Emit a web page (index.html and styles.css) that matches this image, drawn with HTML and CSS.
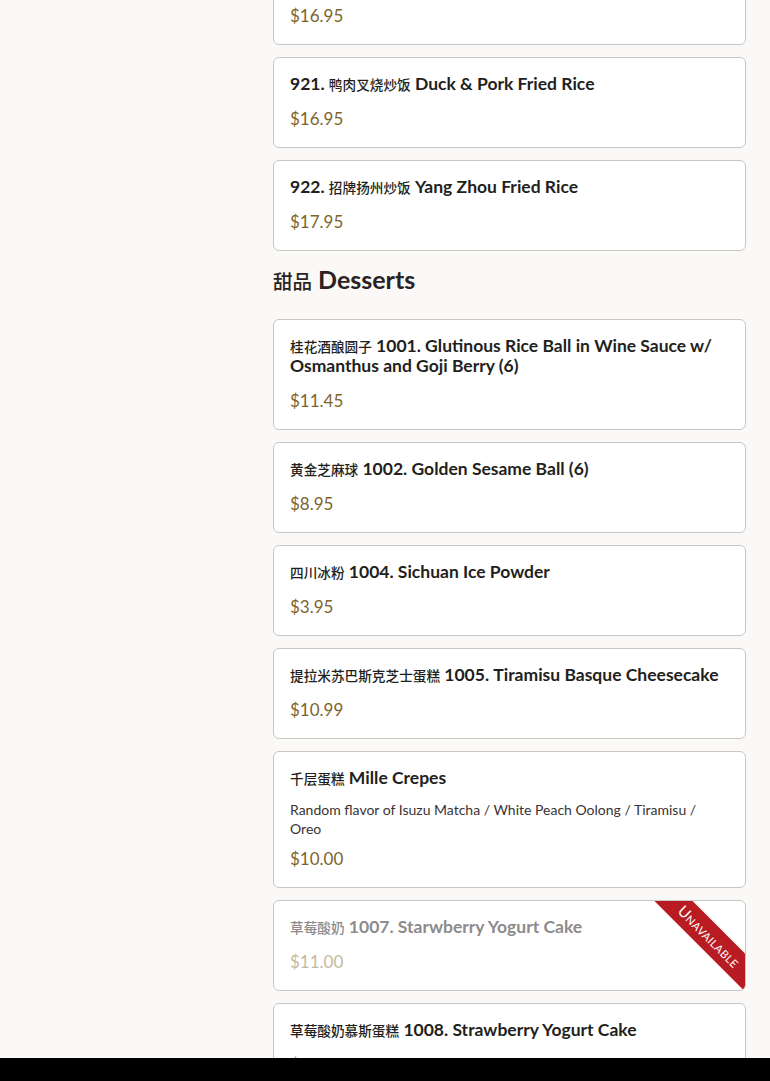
FILE: index.html
```html
<!DOCTYPE html>
<html lang="en">
<head>
<meta charset="utf-8">
<title>Menu</title>
<link rel="stylesheet" href="styles.css">
</head>
<body>
<div class="layout">
  <aside class="sidebar"></aside>
  <main class="menu">
    <section class="category">
      <div class="item">
        <div class="item-price">$16.95</div>
      </div>
      <div class="item">
        <h3 class="item-title">921. <span class="zh">鸭肉叉烧炒饭</span> Duck &amp; Pork Fried Rice</h3>
        <div class="item-price">$16.95</div>
      </div>
      <div class="item">
        <h3 class="item-title">922. <span class="zh">招牌扬州炒饭</span> Yang Zhou Fried Rice</h3>
        <div class="item-price">$17.95</div>
      </div>
    </section>
    <section class="category">
      <h2 class="category-title"><span class="zh">甜品</span> Desserts</h2>
      <div class="item">
        <h3 class="item-title"><span class="zh">桂花酒酿圆子</span> 1001. Glutinous Rice Ball in Wine Sauce w/ Osmanthus and Goji Berry (6)</h3>
        <div class="item-price">$11.45</div>
      </div>
      <div class="item">
        <h3 class="item-title"><span class="zh">黄金芝麻球</span> 1002. Golden Sesame Ball (6)</h3>
        <div class="item-price">$8.95</div>
      </div>
      <div class="item">
        <h3 class="item-title"><span class="zh">四川冰粉</span> 1004. Sichuan Ice Powder</h3>
        <div class="item-price">$3.95</div>
      </div>
      <div class="item">
        <h3 class="item-title"><span class="zh">提拉米苏巴斯克芝士蛋糕</span> 1005. Tiramisu Basque Cheesecake</h3>
        <div class="item-price">$10.99</div>
      </div>
      <div class="item">
        <h3 class="item-title"><span class="zh">千层蛋糕</span> Mille Crepes</h3>
        <p class="item-desc">Random flavor of Isuzu Matcha / White Peach Oolong / Tiramisu / Oreo</p>
        <div class="item-price">$10.00</div>
      </div>
      <div class="item unavailable">
        <h3 class="item-title"><span class="zh">草莓酸奶</span> 1007. Starwberry Yogurt Cake</h3>
        <div class="item-price">$11.00</div>
        <span class="ribbon">Unavailable</span>
      </div>
      <div class="item">
        <h3 class="item-title"><span class="zh">草莓酸奶慕斯蛋糕</span> 1008. Strawberry Yogurt Cake</h3>
        <div class="item-price">$12.00</div>
      </div>
    </section>
  </main>
</div>
<div class="bottom-bar"></div>
</body>
</html>
```

FILE: styles.css
```css
* { box-sizing: border-box; }

html, body {
  margin: 0;
  padding: 0;
  background: #faf9f7;
  font-family: "Lato", "Noto Sans CJK SC", sans-serif;
  color: #231f20;
}

.layout {
  display: grid;
  grid-template-columns: 273px 473px;
  padding-right: 24px;
}

.menu {
  margin-top: -14px;
  display: flex;
  flex-direction: column;
}

.category {
  display: flex;
  flex-direction: column;
  gap: 12px;
}

.zh {
  font-family: "Noto Sans CJK SC", sans-serif;
  font-size: 0.78em;
  font-weight: 500;
  line-height: 1;
}

.category-title {
  margin: 12px 0 12px;
  font-size: 25px;
  line-height: 32px;
  font-weight: 700;
  color: #2a2223;
}

.item {
  position: relative;
  overflow: hidden;
  background: #ffffff;
  border: 1px solid #c9c7c4;
  border-radius: 6px;
  padding: 16px 16px 15px 16px;
}

.item-title {
  margin: 0 0 12px;
  font-size: 17.5px;
  line-height: 20px;
  font-weight: 700;
  color: #231f20;
}

.item-desc {
  margin: 0 0 8px;
  font-size: 14px;
  line-height: 19px;
  color: #3a3334;
}

.item-price {
  font-size: 17px;
  line-height: 26px;
  color: #7d642c;
}

.unavailable .item-title { color: #8d8b8b; }
.unavailable .item-price { color: #c4b99e; }

.ribbon {
  position: absolute;
  top: 22px;
  right: -46px;
  width: 164px;
  height: 27px;
  background: #b81c22;
  color: #ffffff;
  font-size: 15px;
  line-height: 27px;
  font-variant: small-caps;
  letter-spacing: 0.4px;
  text-align: center;
  transform: rotate(45deg);
}

.bottom-bar {
  position: fixed;
  left: 0;
  right: 0;
  bottom: 0;
  height: 23px;
  background: #000000;
}
```
